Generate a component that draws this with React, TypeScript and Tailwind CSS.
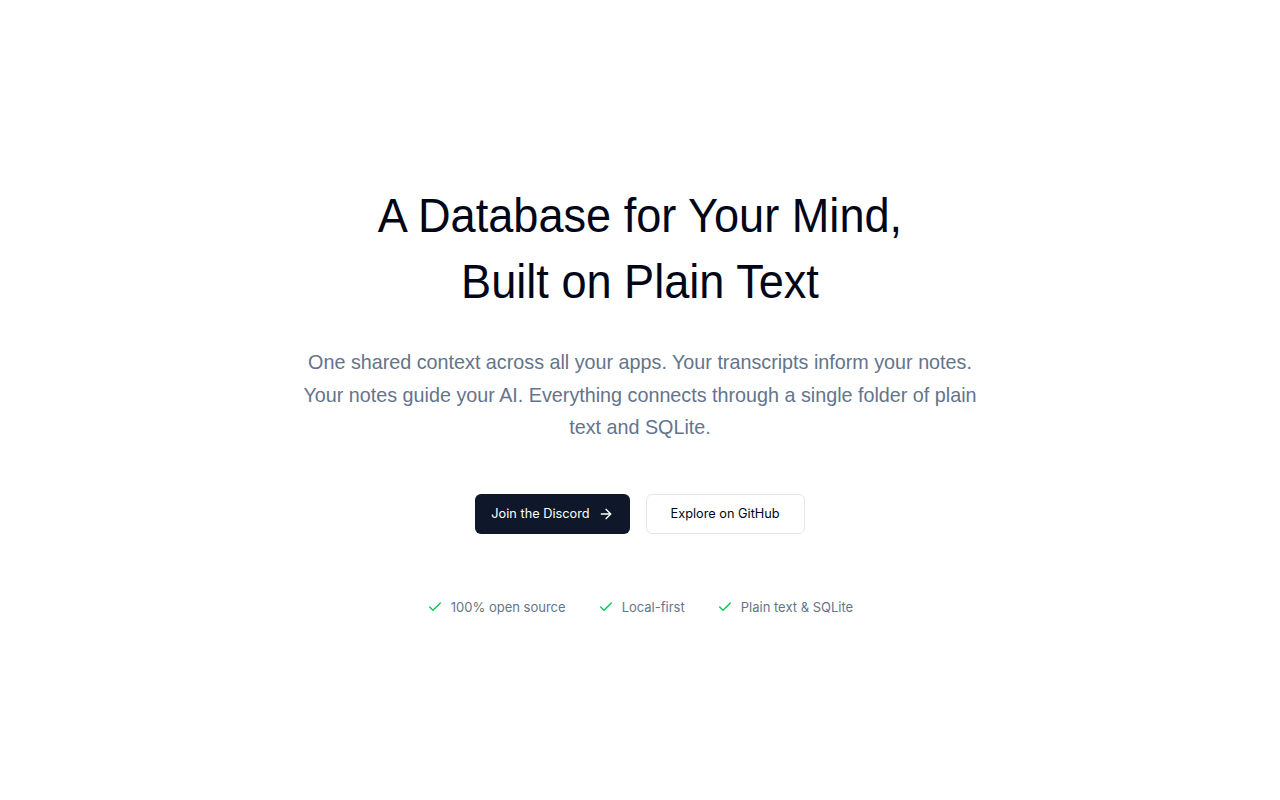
import { ArrowRight, Check } from 'lucide-react';

const features = ['100% open source', 'Local-first', 'Plain text & SQLite'];

const App: React.FC = () => {
    return (
        <div className="min-h-screen bg-white flex items-center justify-center px-6 overflow-hidden">
            <main className="w-full mx-auto flex flex-col items-center text-center">
                {/* 헤드라인 (좁은 글꼴 흉내) */}
                <h1 className="w-[900px] scale-x-[0.94] text-[48px] leading-[66px] font-normal text-[#020617] font-['Liberation_Sans',Arial,sans-serif]">
                    A Database for Your Mind,
                    <br />
                    Built on Plain Text
                </h1>

                <p className="mt-[31px] w-[730px] scale-x-[0.94] text-[21px] leading-[32.5px] text-[#64748b] font-['Liberation_Sans',Arial,sans-serif]">
                    One shared context across all your apps. Your transcripts inform your notes.
                    Your notes guide your AI. Everything connects through a single folder of plain
                    text and SQLite.
                </p>

                {/* 버튼 */}
                <div className="mt-[50px] flex items-center gap-4 font-['Inter',sans-serif]">
                    <button
                        type="button"
                        className="h-10 px-4 rounded-md bg-[#0f172a] text-white text-[12.75px] flex items-center gap-2"
                    >
                        Join the Discord
                        <ArrowRight className="w-4 h-4" strokeWidth={2} />
                    </button>
                    <button
                        type="button"
                        className="h-10 px-6 rounded-md border border-gray-200 bg-white text-[#020617] text-[12.75px]"
                    >
                        Explore on GitHub
                    </button>
                </div>

                {/* 특징 */}
                <ul className="mt-[64px] flex items-center gap-8 text-[13px] text-[#64748b] font-['Inter',sans-serif]">
                    {features.map(item => (
                        <li key={item} className="flex items-center gap-2">
                            <Check className="w-4 h-4 text-green-500" strokeWidth={2} />
                            {item}
                        </li>
                    ))}
                </ul>
            </main>
        </div>
    );
};

export default App;
